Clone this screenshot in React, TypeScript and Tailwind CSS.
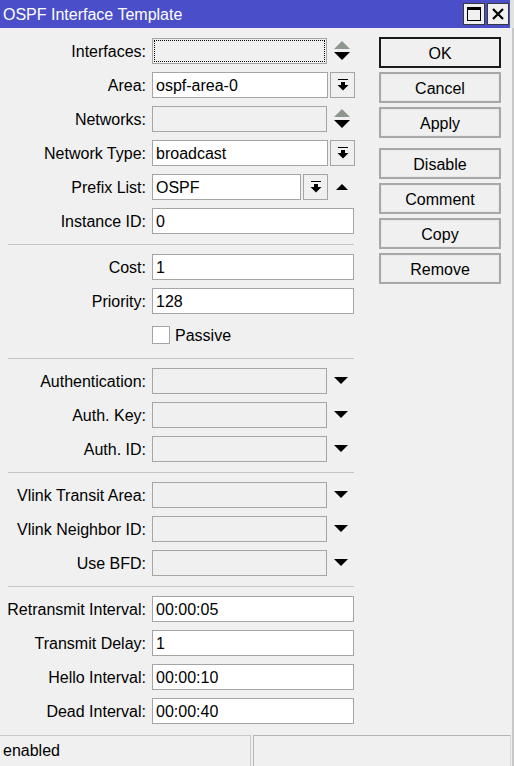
import React from "react";

type Field =
  | { kind: "text"; label: string; value: string }
  | { kind: "combo"; label: string; value: string }
  | { kind: "updown"; label: string; focus?: boolean }
  | { kind: "down"; label: string }
  | { kind: "prefix"; label: string; value: string }
  | { kind: "check"; label: string };

const sections: Field[][] = [
  [
    { kind: "updown", label: "Interfaces:", focus: true },
    { kind: "combo", label: "Area:", value: "ospf-area-0" },
    { kind: "updown", label: "Networks:" },
    { kind: "combo", label: "Network Type:", value: "broadcast" },
    { kind: "prefix", label: "Prefix List:", value: "OSPF" },
    { kind: "text", label: "Instance ID:", value: "0" },
  ],
  [
    { kind: "text", label: "Cost:", value: "1" },
    { kind: "text", label: "Priority:", value: "128" },
    { kind: "check", label: "Passive" },
  ],
  [
    { kind: "down", label: "Authentication:" },
    { kind: "down", label: "Auth. Key:" },
    { kind: "down", label: "Auth. ID:" },
  ],
  [
    { kind: "down", label: "Vlink Transit Area:" },
    { kind: "down", label: "Vlink Neighbor ID:" },
    { kind: "down", label: "Use BFD:" },
  ],
  [
    { kind: "text", label: "Retransmit Interval:", value: "00:00:05" },
    { kind: "text", label: "Transmit Delay:", value: "1" },
    { kind: "text", label: "Hello Interval:", value: "00:00:10" },
    { kind: "text", label: "Dead Interval:", value: "00:00:40" },
  ],
];

const buttonsTop = ["OK", "Cancel", "Apply"];
const buttonsBottom = ["Disable", "Comment", "Copy", "Remove"];

function DropButton() {
  return (
    <div className="ml-[2px] flex h-[26px] w-[25px] items-center justify-center border border-[#a5a5a5] bg-[#f0f0f0]">
      <svg width="12" height="12" viewBox="0 0 12 12">
        <rect x="1" y="0" width="10" height="1" fill="#000" />
        <rect x="4" y="3" width="4" height="3" fill="#000" />
        <polygon points="0.5,6 11.5,6 6,11.5" fill="#000" />
      </svg>
    </div>
  );
}

function UpDown() {
  return (
    <svg width="16" height="20" viewBox="0 0 16 20" className="ml-[7px]">
      <polygon points="0,8 16,8 8,0" fill="#8d978d" />
      <polygon points="0,11 16,11 8,19" fill="#000" />
    </svg>
  );
}

function DownTri() {
  return (
    <svg width="14" height="8" viewBox="0 0 14 8" className="ml-[7px]">
      <polygon points="0,0 14,0 7,7" fill="#000" />
    </svg>
  );
}

function UpTri() {
  return (
    <svg width="14" height="8" viewBox="0 0 14 8" className="ml-[7px]">
      <polygon points="1,7 13,7 7,1" fill="#000" />
    </svg>
  );
}

function Row({ f }: { f: Field }) {
  if (f.kind === "check") {
    return (
      <div className="flex h-[26px] items-center">
        <div className="ml-[152px] h-[18px] w-[18px] border border-[#a5a5a5] bg-white" />
        <span className="ml-[5px] translate-y-[1px]">{f.label}</span>
      </div>
    );
  }
  return (
    <div className="flex h-[26px] items-center">
      <div className="w-[146px] translate-y-[1px] whitespace-nowrap text-right">{f.label}</div>
      <div className="ml-[6px] flex items-center">
        {f.kind === "text" && (
          <div className="flex h-[26px] w-[202px] items-center border border-[#a5a5a5] bg-white pl-[3px]">
            <span className="translate-y-[1px]">{f.value}</span>
          </div>
        )}
        {f.kind === "combo" && (
          <>
            <div className="flex h-[26px] w-[176px] items-center border border-[#a5a5a5] bg-white pl-[3px]">
              <span className="translate-y-[1px]">{f.value}</span>
            </div>
            <DropButton />
          </>
        )}
        {f.kind === "prefix" && (
          <>
            <div className="flex h-[26px] w-[149px] items-center border border-[#a5a5a5] bg-white pl-[3px]">
              <span className="translate-y-[1px]">{f.value}</span>
            </div>
            <DropButton />
            <UpTri />
          </>
        )}
        {f.kind === "updown" && (
          <>
            <div className="relative h-[26px] w-[175px] border border-[#a5a5a5] bg-[#f0f0f0]">
              {f.focus && (
                <div className="absolute inset-[1px] border border-dotted border-black" />
              )}
            </div>
            <UpDown />
          </>
        )}
        {f.kind === "down" && (
          <>
            <div className="h-[26px] w-[175px] border border-[#a5a5a5] bg-[#f0f0f0]" />
            <DownTri />
          </>
        )}
      </div>
    </div>
  );
}

function Btn({ label, focus }: { label: string; focus?: boolean }) {
  return (
    <div
      className={
        focus
          ? "flex h-[31px] w-[122px] items-center justify-center border-2 border-[#1a1a1a] bg-[#f0f0f0]"
          : "flex h-[31px] w-[122px] items-center justify-center border-2 border-[#a8a8a8] bg-[#f0f0f0] shadow-[inset_0_0_0_1px_#e8e8e8]"
      }
    >
      <span className="translate-y-[1px]">{label}</span>
    </div>
  );
}

export default function App() {
  return (
    <div
      className="flex h-[766px] w-[514px] flex-col bg-[#f0f0f0] text-[16px] leading-none text-black"
      style={{ fontFamily: '"Liberation Sans", Arial, sans-serif' }}
    >
      <div className="flex h-[28px] shrink-0 items-center border-r-[4px] border-[#e2e2e2] bg-[#4a4ec9] pl-[3px] pr-[1px]">
        <span className="flex-1 translate-y-[1px] text-white">OSPF Interface Template</span>
        <div className="flex h-[22px] w-[22px] items-center justify-center border border-[#3a3a3a] bg-[#f0f0f0]">
          <svg width="14" height="14" viewBox="0 0 14 14">
            <rect x="0.5" y="0.5" width="13" height="13" fill="none" stroke="#000" />
            <rect x="0" y="0" width="14" height="3" fill="#000" />
          </svg>
        </div>
        <div className="ml-[2px] flex h-[22px] w-[22px] items-center justify-center border border-[#3a3a3a] bg-[#f0f0f0]">
          <svg width="12" height="12" viewBox="0 0 12 12">
            <path d="M1 1 L11 11 M11 1 L1 11" stroke="#000" strokeWidth="2.2" />
          </svg>
        </div>
      </div>

      <div className="flex flex-1 border-r-[2px] border-[#c8c8c8] pr-[1px]">
        <div className="w-[362px] pt-[10px]">
          {sections.map((sec, i) => (
            <div key={i}>
              {i > 0 && <div className="ml-[8px] mb-[9px] mt-[10px] h-px w-[346px] bg-[#c4c4c4]" />}
              <div className="flex flex-col gap-[8px]">
                {sec.map((f) => (
                  <Row key={f.label} f={f} />
                ))}
              </div>
            </div>
          ))}
        </div>
        <div className="ml-[17px] flex flex-col pt-[9px]">
          <div className="flex flex-col gap-[4px]">
            {buttonsTop.map((b, i) => (
              <Btn key={b} label={b} focus={i === 0} />
            ))}
          </div>
          <div className="mt-[10px] flex flex-col gap-[4px]">
            {buttonsBottom.map((b) => (
              <Btn key={b} label={b} />
            ))}
          </div>
        </div>
      </div>

      <div className="flex h-[31px] shrink-0 border-r-[2px] border-[#c8c8c8] pr-[1px]">
        <div className="flex w-[251px] items-center border-r border-t border-[#c8c8c8] pl-[3px]">
          enabled
        </div>
        <div className="ml-[2px] flex-1 border-l border-t border-[#b4b4b4] border-r-[#d8d8d8] border-r" />
      </div>
    </div>
  );
}
